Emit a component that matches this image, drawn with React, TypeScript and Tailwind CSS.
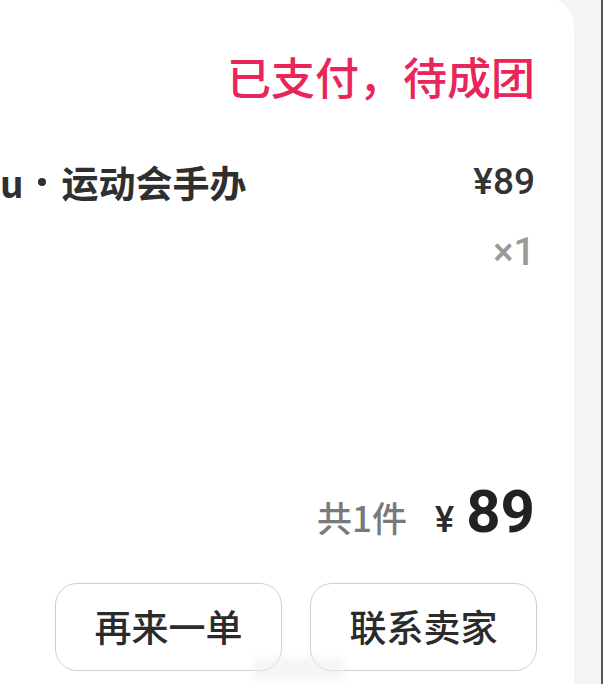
import React from "react";

function OrderButton({ label }: { label: string }) {
  return (
    <button className="w-[227px] h-[88px] rounded-[22px] border border-[#cfcfcf] bg-white text-[37px] text-[#2b2b2b] font-medium flex items-center justify-center">
      {label}
    </button>
  );
}

export default function App() {
  return (
    <div className="relative w-[603px] h-[684px] bg-[#f5f5f5] flex overflow-hidden font-[family-name:'Noto_Sans_CJK_SC',sans-serif]">
      <div className="w-[574px] h-[700px] -mt-[4px] bg-white rounded-tr-[32px] pr-[39px] pt-[56px] flex flex-col">
        <div className="text-right text-[44px] leading-[48px] text-[#e8265a] font-medium">
          已支付，待成团
        </div>

        <div className="mt-[60px] flex items-center justify-between h-[44px]">
          <div className="flex items-center text-[37px] leading-[44px] font-bold text-[#2f2f2f] whitespace-nowrap">
            <span>u</span>
            <span className="ml-[14px] mr-[16px] w-[8px] h-[8px] rounded-full bg-[#2f2f2f]" />
            <span>运动会手办</span>
          </div>
          <div className="text-[37px] leading-[44px] font-medium text-[#333333] font-[family-name:Roboto,sans-serif]">
            ¥89
          </div>
        </div>

        <div className="mt-[26px] text-right text-[38px] leading-[44px] font-medium text-[#9a9a9a] font-[family-name:Roboto,sans-serif]">
          ×1
        </div>

        <div className="mt-[206px] flex items-baseline justify-end h-[64px]">
          <span className="text-[35px] text-[#7a7a7a] font-medium">共1件</span>
          <span className="ml-[28px] text-[36px] text-[#2b2b2b] font-medium font-[family-name:Roboto,sans-serif]">
            ¥
          </span>
          <span className="ml-[12px] text-[60px] leading-[64px] font-bold text-[#222222] font-[family-name:Roboto,sans-serif]">
            89
          </span>
        </div>

        <div className="mt-[39px] -mr-[2px] flex justify-end gap-[28px]">
          <OrderButton label="再来一单" />
          <OrderButton label="联系卖家" />
        </div>
      </div>
      <div className="w-[2px] h-full ml-auto bg-[#555555]" />
      <div className="absolute left-[254px] top-[658px] w-[90px] h-[22px] bg-[#efefef] blur-[3px] opacity-60" />
    </div>
  );
}
